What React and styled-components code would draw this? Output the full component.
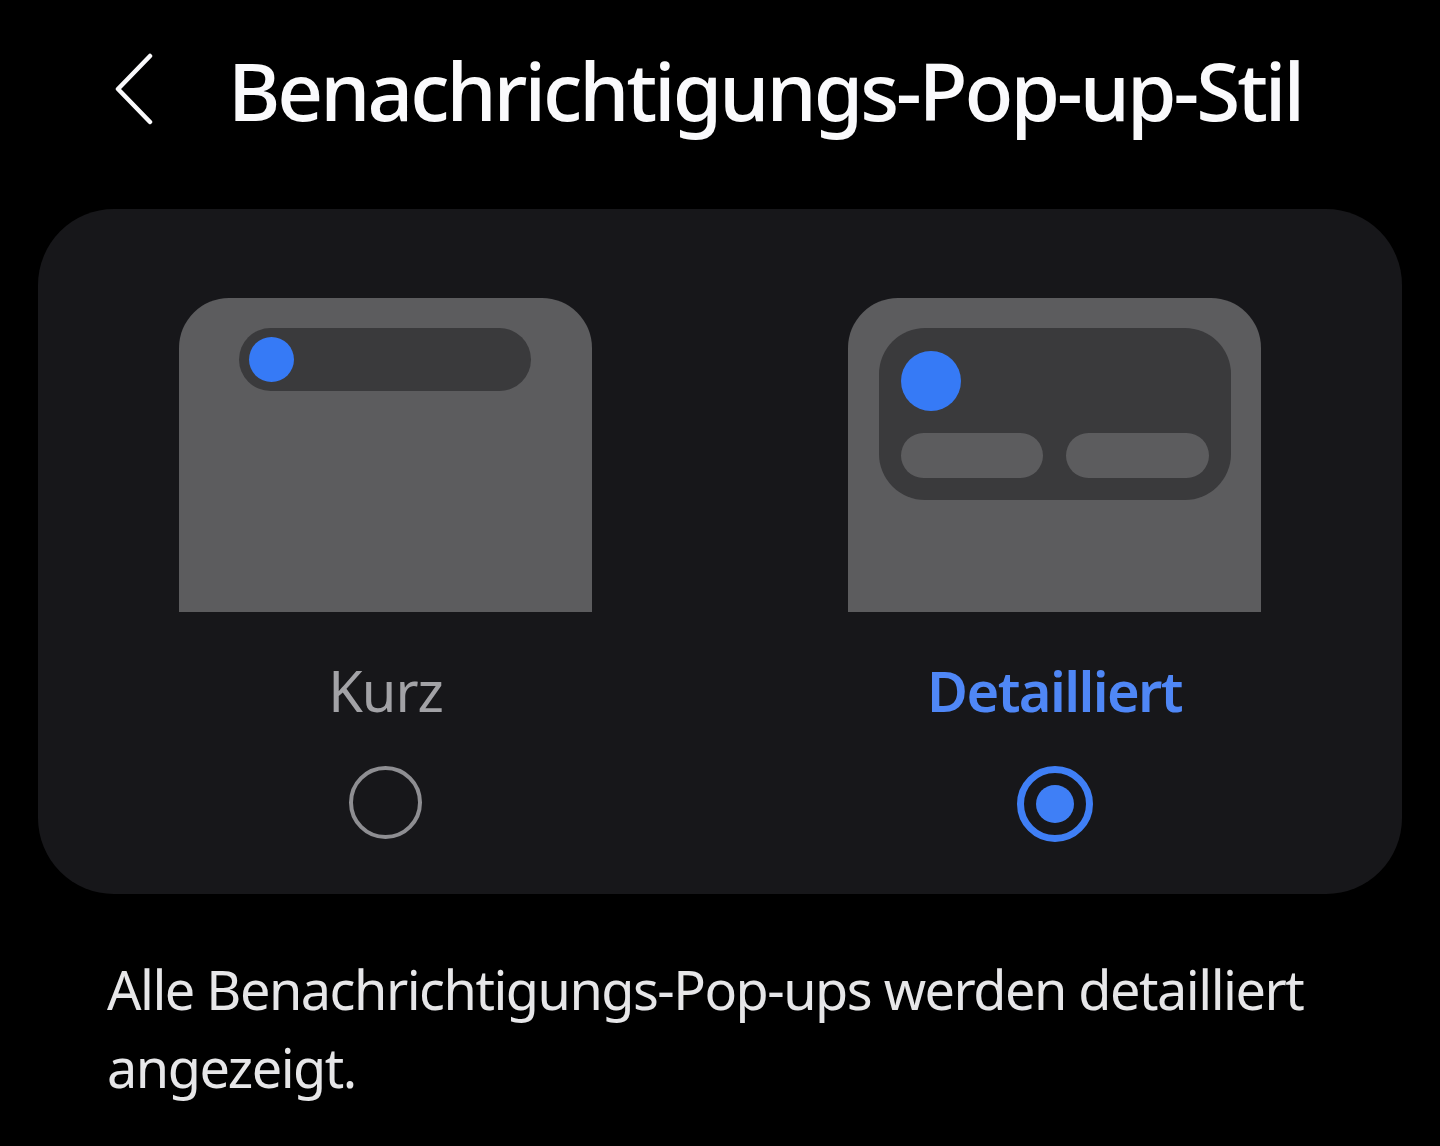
import React, { useState } from "react";
import styled, { createGlobalStyle } from "styled-components";

const GlobalStyle = createGlobalStyle`
  html, body {
    margin: 0;
    padding: 0;
    background: #000;
  }
  body {
    font-family: "Noto Sans", "Open Sans", sans-serif;
    color: #fafafc;
  }
`;

const Page = styled.div`
  width: 1440px;
  height: 1146px;
  background: #000;
  overflow: hidden;
  display: flex;
  flex-direction: column;
`;

const Header = styled.header`
  display: flex;
  align-items: center;
  height: 180px;
  padding: 0 0 0 104px;
  box-sizing: border-box;
  gap: 64px;
  margin-top: -1px;
`;

const BackButton = styled.button`
  width: 60px;
  height: 80px;
  padding: 0;
  border: 0;
  background: none;
  display: flex;
  align-items: center;
  justify-content: center;
  cursor: pointer;
`;

const Title = styled.h1`
  margin: 0;
  font-size: 80px;
  font-weight: 500;
  letter-spacing: -3px;
  color: #fafafc;
`;

const Card = styled.section`
  margin: 30px 38px 0;
  background: #17171a;
  border-radius: 76px;
  padding: 89px 141px 52px;
  display: grid;
  grid-template-columns: 413px 413px;
  justify-content: space-between;
`;

const Option = styled.div`
  display: flex;
  flex-direction: column;
  align-items: center;
  cursor: pointer;
`;

const Preview = styled.div`
  width: 413px;
  height: 314px;
  background: #5c5c5e;
  border-radius: 50px 50px 0 0;
  box-sizing: border-box;
  padding: 30px 0 0 ${(p) => p.$inset}px;
`;

const BriefPill = styled.div`
  width: 292px;
  height: 63px;
  border-radius: 32px;
  background: #3a3a3c;
  display: flex;
  align-items: center;
  padding-left: 10px;
  box-sizing: border-box;
`;

const Dot = styled.div`
  width: ${(p) => p.$size}px;
  height: ${(p) => p.$size}px;
  border-radius: 50%;
  background: #367af6;
`;

const DetailBox = styled.div`
  width: 352px;
  height: 172px;
  border-radius: 46px;
  background: #3a3a3c;
  box-sizing: border-box;
  padding: 23px 22px 0;
  display: flex;
  flex-direction: column;
  gap: 22px;
`;

const ActionRow = styled.div`
  display: grid;
  grid-template-columns: 142px 143px;
  justify-content: space-between;
`;

const ActionPill = styled.div`
  height: 45px;
  border-radius: 23px;
  background: #5c5c5e;
`;

const Label = styled.div`
  margin-top: 40px;
  font-size: 56px;
  line-height: 76px;
  letter-spacing: ${(p) => (p.$active ? "-1.6px" : "-1px")};
  font-weight: ${(p) => (p.$active ? 600 : 400)};
  color: ${(p) => (p.$active ? "#4f87f6" : "#a2a2a6")};
`;

const Radio = styled.div`
  margin-top: 38px;
  width: ${(p) => (p.$active ? 76 : 73)}px;
  height: ${(p) => (p.$active ? 76 : 73)}px;
  box-sizing: border-box;
  border-radius: 50%;
  border: ${(p) => (p.$active ? "7px solid #3f7ff6" : "4px solid #8e8e92")};
  display: flex;
  align-items: center;
  justify-content: center;

  &::after {
    content: "";
    display: ${(p) => (p.$active ? "block" : "none")};
    width: 38px;
    height: 38px;
    border-radius: 50%;
    background: #3f7ff6;
  }
`;

const Description = styled.p`
  margin: 56px 0 0 107px;
  width: 1240px;
  font-size: 54px;
  line-height: 78px;
  letter-spacing: -1.5px;
  color: #e6e6e8;
`;

function Chevron() {
  return (
    <svg width="44" height="72" viewBox="0 0 44 72" fill="none">
      <path
        d="M38 3 L6 36 L38 69"
        stroke="#fafafc"
        strokeWidth="4.5"
        strokeLinecap="round"
        strokeLinejoin="round"
      />
    </svg>
  );
}

export default function App() {
  const [style, setStyle] = useState("detail");

  return (
    <Page>
      <GlobalStyle />
      <Header>
        <BackButton aria-label="Zurück">
          <Chevron />
        </BackButton>
        <Title>Benachrichtigungs-Pop-up-Stil</Title>
      </Header>

      <Card>
        <Option onClick={() => setStyle("brief")}>
          <Preview $inset={60}>
            <BriefPill>
              <Dot $size={45} />
            </BriefPill>
          </Preview>
          <Label $active={style === "brief"}>Kurz</Label>
          <Radio $active={style === "brief"} />
        </Option>

        <Option onClick={() => setStyle("detail")}>
          <Preview $inset={31}>
            <DetailBox>
              <Dot $size={60} />
              <ActionRow>
                <ActionPill />
                <ActionPill />
              </ActionRow>
            </DetailBox>
          </Preview>
          <Label $active={style === "detail"}>Detailliert</Label>
          <Radio $active={style === "detail"} />
        </Option>
      </Card>

      <Description>
        Alle Benachrichtigungs-Pop-ups werden detailliert angezeigt.
      </Description>
    </Page>
  );
}
